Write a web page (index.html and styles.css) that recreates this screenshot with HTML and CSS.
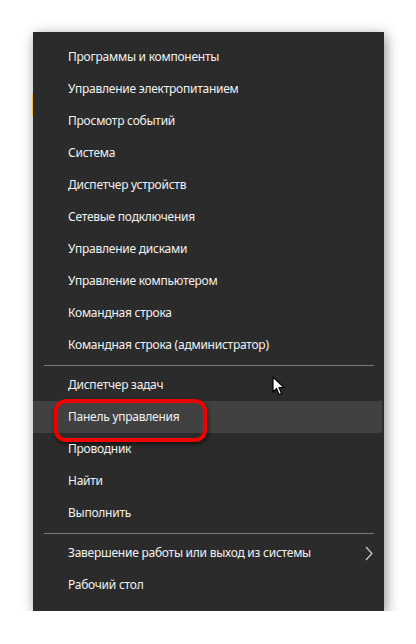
FILE: index.html
```html
<!DOCTYPE html>
<html lang="ru">
<head>
    <meta charset="UTF-8">
    <title>Меню</title>
    <link rel="stylesheet" href="styles.css">
</head>
<body>
<div class="menu">
    <ul class="group">
        <li>Программы и компоненты</li>
        <li>Управление электропитанием</li>
        <li>Просмотр событий</li>
        <li>Система</li>
        <li>Диспетчер устройств</li>
        <li>Сетевые подключения</li>
        <li>Управление дисками</li>
        <li>Управление компьютером</li>
        <li>Командная строка</li>
        <li>Командная строка (администратор)</li>
    </ul>
    <ul class="group">
        <li>Диспетчер задач</li>
        <li class="hover marked">Панель управления</li>
        <li>Проводник</li>
        <li>Найти</li>
        <li>Выполнить</li>
    </ul>
    <ul class="group">
        <li class="sub">Завершение работы или выход из системы
            <svg class="chevron" width="8" height="15" viewBox="0 0 8 15">
                <path d="M1 1 L7 7.5 L1 14" fill="none" stroke="#cfcfcf" stroke-width="1.2"/>
            </svg>
        </li>
        <li>Рабочий стол</li>
    </ul>
    <svg class="cursor" width="14" height="21" viewBox="0 0 14 21">
        <path d="M1 1 L1 16 L4.5 12.5 L7 18.5 L9.5 17.5 L7 11.5 L12 11.5 Z" fill="#fff" stroke="#000" stroke-width="1.2" stroke-linejoin="round"/>
    </svg>
</div>
</body>
</html>
```

FILE: styles.css
```css
* {
    margin: 0;
    padding: 0;
    list-style: none;
    box-sizing: border-box;
}

body {
    background: #fff;
    font-family: "Noto Sans", "Open Sans", sans-serif;
}

.menu {
    position: relative;
    width: 351px;
    margin: 32px 0 0 33px;
    padding: 9px 0 10px;
    background: #2b2b2b;
    box-shadow: 2px 3px 12px rgba(0, 0, 0, 0.45);
}

.menu::before {
    content: "";
    position: absolute;
    left: -1px;
    top: 62px;
    width: 1px;
    height: 22px;
    background: #f0c040;
}

.group + .group {
    margin-top: 4px;
    padding-top: 4px;
    position: relative;
}

.group + .group::before {
    content: "";
    position: absolute;
    top: 0;
    left: 11px;
    right: 10px;
    height: 1px;
    background: #7a7a7a;
}

.group li {
    position: relative;
    height: 32px;
    line-height: 32px;
    padding-left: 35px;
    color: #f2f2f2;
    font-size: 12px;
    letter-spacing: -0.25px;
    white-space: nowrap;
}

.group li.hover {
    background: #414141;
    margin-right: 2px;
}

.group li.marked::after {
    content: "";
    position: absolute;
    left: 21px;
    top: -2px;
    width: 145px;
    height: 35px;
    border: 4px solid #f00000;
    border-radius: 12px;
    box-shadow: 1px 2px 4px rgba(0, 0, 0, 0.6);
}

.chevron {
    position: absolute;
    right: 11px;
    top: 9px;
}

.cursor {
    position: absolute;
    left: 239px;
    top: 344px;
}
```
